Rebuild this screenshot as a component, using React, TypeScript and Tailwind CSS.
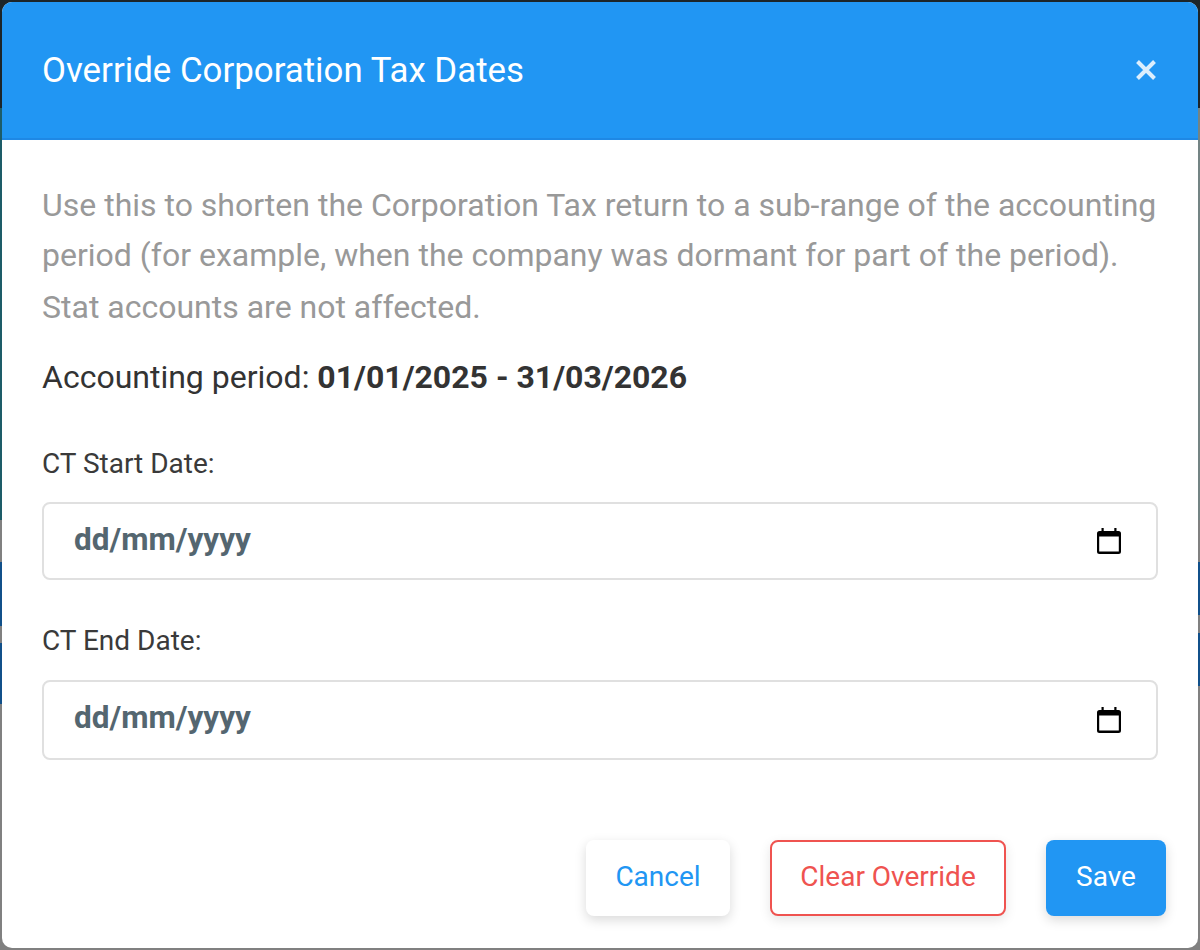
export default function App() {
  return (
    <div className="h-[950px] w-[1200px] overflow-hidden bg-no-repeat p-[2px] font-['Roboto',sans-serif] bg-[position:right_top,left_top] bg-[size:2px_100%,100%_100%] bg-[linear-gradient(180deg,#1c2529_0px,#1c2529_108px,#748484_108px,#748484_520px,#808080_520px,#808080_562px,#11508a_562px,#11508a_615px,#808080_615px,#808080_633px,#11508a_633px,#11508a_686px,#808080_686px,#808080_950px),linear-gradient(180deg,#1c2529_0px,#1c2529_108px,#1d5c68_108px,#1d5c68_520px,#808080_520px,#808080_562px,#11508a_562px,#11508a_626px,#808080_626px,#808080_643px,#11508a_643px,#11508a_704px,#808080_704px,#808080_950px)]">
      <div className="flex h-[946px] w-[1196px] flex-col overflow-hidden rounded-[10px] bg-white">
        <header className="flex h-[138px] shrink-0 items-center justify-between border-b-2 border-[#1e88e5] bg-[#2196f3] pl-[40px] pr-[40px]">
          <h2 className="pt-[1px] text-[34.85px] leading-[44px] font-normal text-white">Override Corporation Tax Dates</h2>
          <svg width="24" height="24" viewBox="0 0 24 24" fill="none" stroke="#dbeefd" strokeWidth="4">
            <path d="M3.5 3.5 20.5 20.5M20.5 3.5 3.5 20.5" />
          </svg>
        </header>
        <div className="flex flex-1 flex-col px-[40px] pt-[40px]">
          <p className="text-[32px] leading-[51px] text-[#999999]">
            Use this to shorten the Corporation Tax return to a sub-range of the accounting
            <br />
            <span className="relative top-[-1px]">period (for example, when the company was dormant for part of the period).</span>
            <br />
            Stat accounts are not affected.
          </p>
          <p className="mt-[19px] text-[32px] leading-[51px] text-[#333333]">
            Accounting period: <strong className="font-bold">01/01/2025 - 31/03/2026</strong>
          </p>
          <label className="mt-[43px] block text-[28px] leading-[36px] text-[#3a3a3a]">CT Start Date:</label>
          <div className="mt-[20px] flex h-[78px] items-center justify-between rounded-[8px] border-2 border-[#e0e0e0] pl-[30px] pr-[35px]">
            <span className="pb-[2px] text-[31.5px] font-bold text-[#546670]">dd/mm/yyyy</span>
            <Calendar />
          </div>
          <label className="mt-[43px] block text-[28px] leading-[36px] text-[#3a3a3a]">CT End Date:</label>
          <div className="mt-[21px] flex h-[80px] items-center justify-between rounded-[8px] border-2 border-[#e0e0e0] pl-[30px] pr-[35px]">
            <span className="pb-[4px] text-[31.5px] font-bold text-[#546670]">dd/mm/yyyy</span>
            <Calendar />
          </div>
          <div className="mt-[80px] mr-[-8px] flex justify-end gap-[40px]">
            <button className="h-[76px] w-[144px] rounded-[8px] bg-white pb-[2px] text-[28px] text-[#2196f3] shadow-[0_4px_12px_rgba(0,0,0,0.15)]">Cancel</button>
            <button className="h-[76px] w-[236px] rounded-[8px] border-2 border-[#ef5350] bg-white pb-[2px] text-[28px] text-[#ef5350] shadow-[0_4px_12px_rgba(0,0,0,0.1)]">Clear Override</button>
            <button className="h-[76px] w-[120px] rounded-[8px] bg-[#2196f3] pb-[2px] text-[28px] text-white shadow-[0_4px_12px_rgba(0,0,0,0.15)]">Save</button>
          </div>
        </div>
      </div>
    </div>
  );
}

function Calendar() {
  return (
    <svg width="24" height="26" viewBox="0 0 24 26" className="shrink-0">
      <path fill="#000" d="M4.5 0h2.2v3h10.6V0h2.2v3h2A2.5 2.5 0 0 1 24 5.5v18a2.5 2.5 0 0 1-2.5 2.5h-19A2.5 2.5 0 0 1 0 23.5v-18A2.5 2.5 0 0 1 2.5 3h2V0ZM2.2 8.5v15h19.6v-15H2.2Z" />
    </svg>
  );
}
